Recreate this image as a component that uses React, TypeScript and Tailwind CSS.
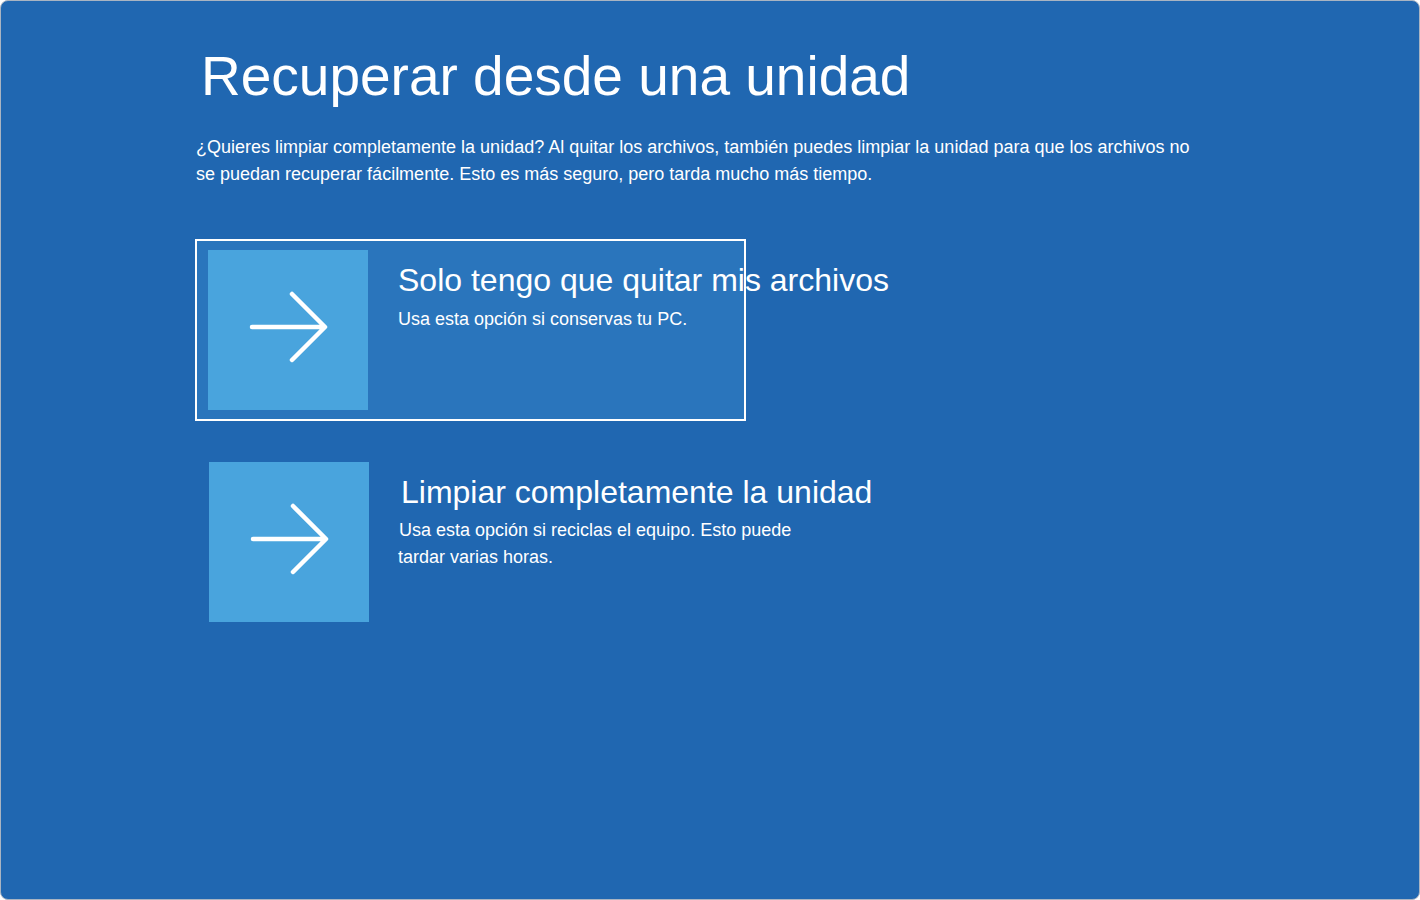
import React from "react";

function Arrow() {
  return (
    <svg width="160" height="160" viewBox="0 0 160 160" fill="none">
      <path
        d="M44 77 H116 M84 44 L117 77 L84 110"
        stroke="white"
        strokeWidth="4.5"
        strokeLinecap="round"
        strokeLinejoin="round"
      />
    </svg>
  );
}

export default function App() {
  return (
    <div className="h-[900px] w-[1420px] bg-white" style={{ fontFamily: '"Liberation Sans", Arial, sans-serif' }}>
      <div className="h-[900px] w-[1420px] overflow-hidden rounded-[8px] border border-[#a9b4c2] bg-[#2067b1] text-white">
        <div className="pl-[194px] pt-[42px]">
          {/* Title */}
          <h1 className="pl-[6px] text-[55px] leading-[66px] font-normal">Recuperar desde una unidad</h1>

          <p className="mt-[25px] w-[1005px] pl-[1px] text-[18px] leading-[27px]">
            ¿Quieres limpiar completamente la unidad? Al quitar los archivos, también puedes limpiar la unidad para que los archivos no
            se puedan recuperar fácilmente. Esto es más seguro, pero tarda mucho más tiempo.
          </p>

          {/* Option 1 (focused) */}
          <div className="mt-[51px] flex h-[182px] w-[551px] gap-[30px] border-2 border-white bg-[#2a75bc] p-[9px] pl-[11px]">
            <div className="flex h-[160px] w-[160px] shrink-0 items-center justify-center bg-[#49a4dd]">
              <Arrow />
            </div>
            <div className="pt-[10px] whitespace-nowrap">
              <div className="text-[32px] leading-[40px]">Solo tengo que quitar mis archivos</div>
              <div className="mt-[6px] text-[18px] leading-[27px]">Usa esta opción si conservas tu PC.</div>
            </div>
          </div>

          {/* Option 2 */}
          <div className="mt-[41px] flex gap-[29px] pl-[14px]">
            <div className="flex h-[160px] w-[160px] shrink-0 items-center justify-center bg-[#49a4dd]">
              <Arrow />
            </div>
            <div className="pt-[10px]">
              <div className="whitespace-nowrap pl-[3px] text-[32px] leading-[40px]">Limpiar completamente la unidad</div>
              <div className="mt-[5px] w-[410px] text-[18px] leading-[27px]">
                <span className="pl-[1px]">Usa esta opción si reciclas el equipo. Esto puede</span>
                <br />
                tardar varias horas.
              </div>
            </div>
          </div>
        </div>
      </div>
    </div>
  );
}
